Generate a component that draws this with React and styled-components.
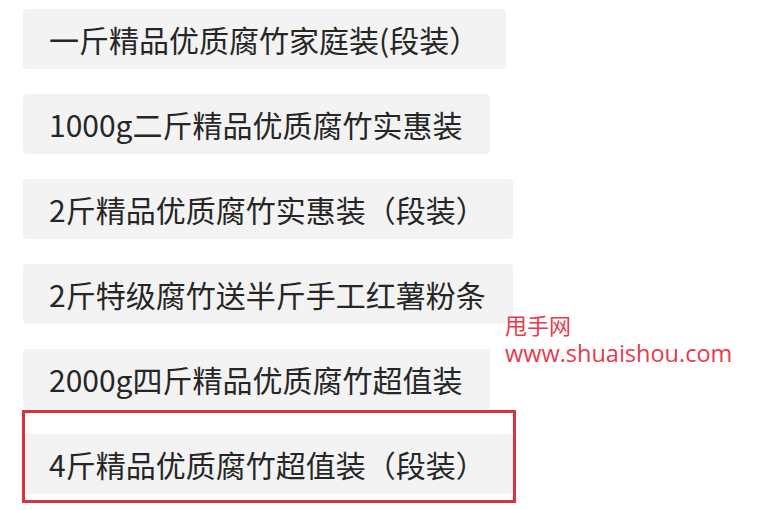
import React from "react";
import styled, { createGlobalStyle } from "styled-components";

const GlobalStyle = createGlobalStyle`
  html, body {
    margin: 0;
    padding: 0;
    background: #ffffff;
  }
  body {
    width: 768px;
    height: 510px;
    overflow: hidden;
    font-family: "Noto Sans CJK SC", "Noto Sans", sans-serif;
  }
`;

const options = [
  "一斤精品优质腐竹家庭装(段装）",
  "1000g二斤精品优质腐竹实惠装",
  "2斤精品优质腐竹实惠装（段装）",
  "2斤特级腐竹送半斤手工红薯粉条",
  "2000g四斤精品优质腐竹超值装",
  "4斤精品优质腐竹超值装（段装）",
];

const Page = styled.div`
  position: relative;
  width: 768px;
  height: 510px;
  box-sizing: border-box;
  padding: 9px 0 0 23px;
`;

const OptionList = styled.div`
  display: flex;
  flex-direction: column;
  align-items: flex-start;
  gap: 25px;
`;

const Chip = styled.div`
  position: relative;
  display: inline-flex;
  align-items: center;
  height: 60px;
  padding: 0 27px 0 26px;
  background-color: #f3f3f3;
  border-radius: 4px;
  color: #262626;
  font-size: 30px;
  font-weight: 400;
  white-space: nowrap;

  ${(props) =>
    props.marked &&
    `
    &::after {
      content: "";
      position: absolute;
      top: -24px;
      bottom: -9px;
      left: -1px;
      right: -3px;
      border: 3px solid #d8323f;
      pointer-events: none;
    }
  `}
`;

const Watermark = styled.div`
  position: absolute;
  left: 505px;
  top: 312px;
  display: flex;
  flex-direction: column;
  gap: 4px;
  color: #e8394b;

  .name {
    font-family: "Noto Sans CJK SC", sans-serif;
    font-size: 22px;
    line-height: 24px;
  }
  .url {
    font-family: "Open Sans", "Noto Sans", sans-serif;
    font-size: 23.5px;
    line-height: 26px;
  }
`;

const App = () => {
  return (
    <>
      <GlobalStyle />
      <Page>
        <OptionList>
          {options.map((label, i) => (
            <Chip key={label} marked={i === options.length - 1}>
              {label}
            </Chip>
          ))}
        </OptionList>
        <Watermark>
          <div className="name">甩手网</div>
          <div className="url">www.shuaishou.com</div>
        </Watermark>
      </Page>
    </>
  );
};

export default App;
